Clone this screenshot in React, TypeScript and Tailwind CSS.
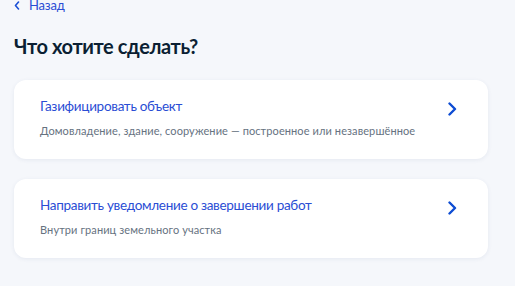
import React from "react";

const Chevron = () => (
  <svg width="9" height="14" viewBox="0 0 9 14" fill="none">
    <path d="M1.5 1.5L7 7L1.5 12.5" stroke="#0d4cd3" strokeWidth="2.4" strokeLinecap="round" strokeLinejoin="round" />
  </svg>
);

const Card = ({ title, sub }: { title: string; sub: string }) => (
  <div className="flex h-[79px] w-[474px] items-start justify-between rounded-[12px] bg-white pl-[26px] pr-[31px] pt-[18px] shadow-[0_1px_4px_rgba(44,68,114,0.08)]">
    <div className="flex flex-col">
      <div className="text-[13.5px] leading-[16px] tracking-[-0.3px] text-[#2a4dd4]">{title}</div>
      <div className="mt-[10px] text-[11px] leading-[14px] tracking-[0.1px] text-[#66727f]">{sub}</div>
    </div>
    <div className="mt-[4px]">
      <Chevron />
    </div>
  </div>
);

export default function App() {
  return (
    <div className="h-[286px] w-[515px] overflow-hidden bg-[#f5f7fb] pl-[14px]" style={{ fontFamily: "Lato, 'Noto Sans', sans-serif" }}>
      <div className="-mt-[3px] flex items-center gap-[9px] text-[13px] leading-[16px] tracking-[-0.2px] text-[#2a4dd4]">
        <svg width="6" height="9" viewBox="0 0 6 9" fill="none">
          <path d="M4.5 1L1.5 4.5L4.5 8" stroke="#1a4fd6" strokeWidth="1.6" strokeLinecap="round" strokeLinejoin="round" />
        </svg>
        <span>Назад</span>
      </div>
      <h1 className="mt-[21px] text-[20px] font-bold leading-[24px] tracking-[-0.4px] text-[#0b1f33]">Что хотите сделать?</h1>
      <div className="mt-[22px] flex flex-col gap-[20px]">
        <Card title="Газифицировать объект" sub="Домовладение, здание, сооружение — построенное или незавершённое" />
        <Card title="Направить уведомление о завершении работ" sub="Внутри границ земельного участка" />
      </div>
    </div>
  );
}
